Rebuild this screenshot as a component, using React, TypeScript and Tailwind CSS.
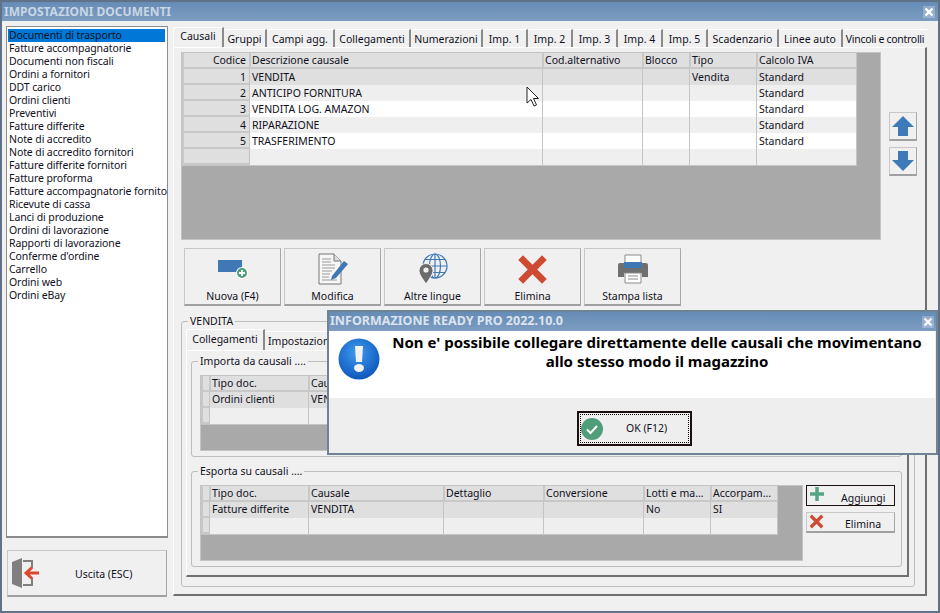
import type { ReactNode } from 'react';

const docs = [
  'Documenti di trasporto', 'Fatture accompagnatorie', 'Documenti non fiscali', 'Ordini a fornitori', 'DDT carico',
  'Ordini clienti', 'Preventivi', 'Fatture differite', 'Note di accredito', 'Note di accredito fornitori',
  'Fatture differite fornitori', 'Fatture proforma', 'Fatture accompagnatorie fornito', 'Ricevute di cassa',
  'Lanci di produzione', 'Ordini di lavorazione', 'Rapporti di lavorazione', "Conferme d'ordine", 'Carrello', 'Ordini web', 'Ordini eBay',
];

const tabs = [
  { label: 'Causali', w: 'w-[51px]' },
  { label: 'Gruppi', w: 'w-[43px]' },
  { label: 'Campi agg.', w: 'w-[68px]' },
  { label: 'Collegamenti', w: 'w-[76px]' },
  { label: 'Numerazioni', w: 'w-[72px]' },
  { label: 'Imp. 1', w: 'w-[45px]' },
  { label: 'Imp. 2', w: 'w-[45px]' },
  { label: 'Imp. 3', w: 'w-[45px]' },
  { label: 'Imp. 4', w: 'w-[45px]' },
  { label: 'Imp. 5', w: 'w-[45px]' },
  { label: 'Scadenzario', w: 'w-[71px]' },
  { label: 'Linee auto', w: 'w-[64px]' },
  { label: 'Vincoli e controlli', w: 'w-[84px] tracking-[-0.3px]' },
];

const causali = [
  ['1', 'VENDITA', '', '', 'Vendita', 'Standard'],
  ['2', 'ANTICIPO FORNITURA', '', '', '', 'Standard'],
  ['3', 'VENDITA LOG. AMAZON', '', '', '', 'Standard'],
  ['4', 'RIPARAZIONE', '', '', '', 'Standard'],
  ['5', 'TRASFERIMENTO', '', '', '', 'Standard'],
  ['', '', '', '', '', ''],
];

const stripes = ['bg-[#dfdfdf]', 'bg-[#efefef]', 'bg-white', 'bg-[#efefef]', 'bg-white', 'bg-[#efefef]'];

function DataGrid({ cols, header, rows, outer, inner, pad = '' }: { cols: string; header: string[]; rows: string[][]; outer: string; inner: string; pad?: string }) {
  return (
    <div className={`${outer} bg-[#a9a9a9] border border-[#c4c4c4]`}>
      <div className={`${inner} border-r border-b border-[#c4c4c4]`}>
        <div className={`grid ${cols} h-[16px] bg-[#dfdfdf]`}>
          {header.map((h, i) => (
            <div key={i} className={`${i === 0 ? 'text-right pr-[3px]' : 'pl-[1px]'} border-l-2 border-b-2 border-[#c8c8c8] leading-[14px] overflow-hidden whitespace-nowrap`}>{h}</div>
          ))}
        </div>
        {rows.map((r, ri) => (
          <div key={ri} className={`grid ${cols} h-[16px] ${stripes[ri]}`}>
            {r.map((c, i) => (
              <div
                key={i}
                className={`${pad} leading-[15px] overflow-hidden whitespace-nowrap ${i === 0 ? 'text-right pr-[3px] bg-[#dfdfdf] border-l-2 border-b-2 border-[#c8c8c8]' : 'pl-[2px] border-l border-[#c4c4c4]'}`}
              >
                {c}
              </div>
            ))}
          </div>
        ))}
      </div>
    </div>
  );
}

function ToolButton({ label, icon }: { label: string; icon: ReactNode }) {
  return (
    <div className="w-[97px] h-[58px] flex flex-col items-center border border-[#c8c8c8] border-r-[#a8a8a8] border-b-2 border-b-[#a0a0a0] bg-[#f0f0f0]">
      <div className="h-[38px] mt-[1px] flex items-center justify-center">{icon}</div>
      <div className="mt-[1px] leading-[14px]">{label}</div>
    </div>
  );
}

function CloseIcon() {
  return (
    <div className="w-[12px] h-[12px] bg-white/25 flex items-center justify-center">
      <svg width="10" height="10" viewBox="0 0 10 10"><path d="M1.5 1.5 8.5 8.5M8.5 1.5 1.5 8.5" stroke="#fff" strokeWidth="2.4" /></svg>
    </div>
  );
}

function RedX({ size }: { size: number }) {
  return (
    <svg width={size} height={size} viewBox="0 0 30 30">
      <path d="M3.5 3.5 26.5 26.5M26.5 3.5 3.5 26.5" stroke="#cf4a32" strokeWidth="6.5" />
    </svg>
  );
}

export default function App() {
  return (
    <div className="relative w-[940px] h-[613px] overflow-hidden border-2 border-[#5f7288] bg-[#f0f0f0] text-[10.5px] text-[#10101c] font-['Noto_Sans','Liberation_Sans',sans-serif] flex flex-col">
      {/* title bar */}
      <div className="h-[19px] shrink-0 bg-gradient-to-b from-[#668cb6] to-[#7d9cc1] flex items-center justify-between pl-[2px] pr-[3px]">
        <span className="text-[12px] font-bold text-[#c9d6e4]">IMPOSTAZIONI DOCUMENTI</span>
        <CloseIcon />
      </div>

      <div className="flex flex-1">
        {/* left column */}
        <div className="w-[169px] shrink-0 pl-[4px] pt-[5px]">
          <div className="w-[162px] h-[512px] bg-white border border-[#8c8c8c] border-b-2 pl-[1px] pt-[2px] overflow-hidden tracking-[-0.1px]">
            {docs.map((d, i) => (
              <div key={d} className={`h-[13px] leading-[13px] pl-[1px] whitespace-nowrap overflow-hidden ${i === 0 ? 'bg-[#0078d7] w-[157px]' : ''}`}>{d}</div>
            ))}
          </div>
          <div className="mt-[12px] ml-[1px] w-[160px] h-[47px] flex items-center border border-[#c8c8c8] border-r-[#a8a8a8] border-b-2 border-b-[#a0a0a0]">
            <svg width="30" height="32" viewBox="0 0 30 32" className="ml-[3px] shrink-0">
              <path d="M1 5 11 1V31L1 27Z" fill="#7f7f7f" />
              <path d="M12 4H21V11M21 21V28H12" fill="none" stroke="#7f7f7f" strokeWidth="2" />
              <path d="M28 16H16M21 10.5 15 16 21 21.500" fill="none" stroke="#d9492f" strokeWidth="3" />
            </svg>
            <span className="ml-[34px] pt-[3px]">Uscita (ESC)</span>
          </div>
        </div>

        {/* right column */}
        <div className="w-[755px] shrink-0 pt-[6px] ml-[2px]">
          <div className="flex h-[20px] items-end">
            {tabs.map((t, i) => (
              <div
                key={t.label}
                className={`${t.w} shrink-0 text-center whitespace-nowrap rounded-tl-[2px] bg-[#f0f0f0] border-t border-white ${i === 0 ? 'h-[20px] leading-[17px] border-l border-l-white border-r-2 border-r-[#8a8a8a]' : i === 12 ? 'h-[18px] leading-[18px]' : 'h-[18px] leading-[18px] border-r-2 border-r-[#8a8a8a]'}`}
              >
                {t.label}
              </div>
            ))}
          </div>
          <div className="w-[754px] h-[549px] border-l border-l-white border-r-2 border-r-[#6f6f6f] border-b-2 border-b-[#6f6f6f] border-t border-t-white pl-[7px] pt-[4px]">
            <div className="flex">
              <DataGrid
                outer="w-[700px] h-[188px]"
                inner="w-[675px]"
                pad="pt-[1px]"
                cols="grid-cols-[67px_293px_100px_47px_67px_100px]"
                header={['Codice', 'Descrizione causale', 'Cod.alternativo', 'Blocco', 'Tipo', 'Calcolo IVA']}
                rows={causali}
              />
              <div className="ml-[8px] pt-[60px] flex flex-col gap-[6px]">
                <div className="w-[28px] h-[29px] flex items-center justify-center border border-[#c8c8c8] border-r-[#a8a8a8] border-b-2 border-b-[#a0a0a0]">
                  <svg width="24" height="22" viewBox="0 0 24 22"><path d="M12 1 23 12H17V21H7V12H1Z" fill="#3f7ab8" /></svg>
                </div>
                <div className="w-[28px] h-[29px] flex items-center justify-center border border-[#c8c8c8] border-r-[#a8a8a8] border-b-2 border-b-[#a0a0a0]">
                  <svg width="24" height="22" viewBox="0 0 24 22"><path d="M12 21 23 10H17V1H7V10H1Z" fill="#3f7ab8" /></svg>
                </div>
              </div>
            </div>

            <div className="flex gap-[3px] mt-[8px] ml-[3px]">
              <ToolButton
                label="Nuova (F4)"
                icon={
                  <svg width="32" height="26" viewBox="0 0 32 26">
                    <path d="M1 4H25V16H1Z" fill="#3f78b5" />
                    <circle cx="25" cy="17" r="6" fill="#fff" />
                    <circle cx="25" cy="17" r="5" fill="#4f9d7b" />
                    <path d="M25 14V20M22 17H28" stroke="#fff" strokeWidth="1.8" />
                  </svg>
                }
              />
              <ToolButton
                label="Modifica"
                icon={
                  <svg width="32" height="32" viewBox="0 0 32 32">
                    <path d="M2 1H17L24 8V31H2Z" fill="#f7f7f7" stroke="#777" />
                    <path d="M17 1V8H24" fill="#ddd" stroke="#777" />
                    <path d="M5 6H14M5 9H14M5 12H18M5 15H18M5 18H15M5 21H13M5 24H12M5 27H20" stroke="#999" />
                    <path d="M15 23 27 8 31 11 19 25 14 27Z" fill="#3f78b5" />
                  </svg>
                }
              />
              <ToolButton
                label="Altre lingue"
                icon={
                  <svg width="32" height="32" viewBox="0 0 32 32">
                    <g fill="none" stroke="#3f78b5" strokeWidth="1.2">
                      <circle cx="18" cy="13" r="12" />
                      <ellipse cx="18" cy="13" rx="5.500" ry="12" />
                      <path d="M18 1V25M6 13H30M8 6.500H28M8 19.500H28" />
                    </g>
                    <path d="M9 31C5 25 2 21 2 17.500A7 7 0 0 1 16 17.500C16 21 13 25 9 31Z" fill="#6a6a6a" stroke="#f0f0f0" />
                    <circle cx="9" cy="17" r="2.600" fill="#f0f0f0" />
                  </svg>
                }
              />
              <ToolButton label="Elimina" icon={<RedX size={31} />} />
              <ToolButton
                label="Stampa lista"
                icon={
                  <svg width="32" height="30" viewBox="0 0 32 30">
                    <path d="M8 1H24V9H8Z" fill="#fff" stroke="#8a8a8a" />
                    <path d="M3 9H29A2 2 0 0 1 31 11V23H25V19H7V23H1V11A2 2 0 0 1 3 9Z" fill="#6f6f6f" />
                    <path d="M7 8H25V14H7Z" fill="#3f78b5" />
                    <path d="M8 19H24V29H8Z" fill="#fff" stroke="#8a8a8a" />
                    <path d="M11 22H21M11 25H21" stroke="#888" />
                  </svg>
                }
              />
            </div>

            {/* VENDITA group */}
            <fieldset className="mt-[9px] w-[734px] h-[272px] border border-[#bdbdbd] rounded-[3px] pl-[4px] pr-[5px]">
              <legend className="ml-[2px] px-[2px] leading-[13px]">VENDITA</legend>
              <div className="flex h-[21px] items-end mt-[1px]">
                <div className="w-[79px] h-[21px] leading-[19px] text-center bg-[#f0f0f0] border-t border-l border-white border-r-2 border-r-[#8a8a8a] rounded-tl-[2px]">Collegamenti</div>
                <div className="w-[70px] h-[19px] leading-[18px] pl-[3px] border-t border-white whitespace-nowrap">Impostazioni</div>
              </div>
              <div className="h-[227px] border-l border-l-white border-t border-t-white border-r-2 border-r-[#6f6f6f] border-b-2 border-b-[#6f6f6f] pl-[4px] pr-[5px] pt-[4px]">
                <fieldset className="h-[102px] border border-[#bdbdbd] rounded-[3px] pl-[8px]">
                  <legend className="-ml-[2px] px-[2px] leading-[13px]">Importa da causali ....</legend>
                  <DataGrid
                    outer="w-[603px] h-[76px] mt-[7px]"
                    inner="w-[577px]"
                    cols="grid-cols-[8px_99px_135px_100px_100px_67px_67px]"
                    header={['', 'Tipo doc.', 'Causale', 'Dettaglio', 'Conversione', 'Lotti e ma...', 'Accorpam...']}
                    rows={[['', 'Ordini clienti', 'VENDITA', '', '', '', ''], ['', '', '', '', '', '', '']]}
                  />
                </fieldset>
                <fieldset className="h-[102px] mt-[8px] border border-[#bdbdbd] rounded-[3px] pl-[8px]">
                  <legend className="-ml-[2px] px-[2px] leading-[13px]">Esporta su causali ....</legend>
                  <div className="flex">
                    <DataGrid
                      outer="w-[603px] h-[76px] mt-[7px]"
                      inner="w-[577px]"
                      cols="grid-cols-[8px_99px_135px_100px_100px_67px_67px]"
                      header={['', 'Tipo doc.', 'Causale', 'Dettaglio', 'Conversione', 'Lotti e ma...', 'Accorpam...']}
                      rows={[['', 'Fatture differite', 'VENDITA', '', '', 'No', 'SI'], ['', '', '', '', '', '', '']]}
                    />
                    <div className="ml-[3px] mt-[7px] flex flex-col gap-[6px]">
                      <div className="w-[89px] h-[21px] flex items-end border border-[#1c1010] bg-[#f0f0f0]">
                        <svg width="16" height="16" viewBox="0 0 16 16" className="ml-[2px] mb-[3px] shrink-0"><path d="M8 1V15M1 8H15" stroke="#55a585" strokeWidth="3.500" /></svg>
                        <span className="ml-[16px] leading-[14px]">Aggiungi</span>
                      </div>
                      <div className="w-[89px] h-[21px] flex items-end border border-[#c8c8c8] border-r-[#a8a8a8] border-b-2 border-b-[#a0a0a0]">
                        <div className="ml-[2px] mb-[2px] shrink-0 flex"><RedX size={15} /></div>
                        <span className="ml-[21px] leading-[14px]">Elimina</span>
                      </div>
                    </div>
                  </div>
                </fieldset>
              </div>
            </fieldset>
          </div>
        </div>
      </div>

      {/* message dialog over the window */}
      <div className="absolute left-[325px] top-[308px] w-[611px] h-[145px] border-2 border-[#6f8296] bg-[#eeeeee] flex flex-col">
        <div className="h-[19px] shrink-0 bg-gradient-to-b from-[#668cb6] to-[#7d9cc1] flex items-center justify-between pl-[1px] pr-[2px]">
          <span className="text-[12.5px] font-bold text-[#dbe4ee]">INFORMAZIONE READY PRO 2022.10.0</span>
          <CloseIcon />
        </div>
        <div className="h-[67px] bg-white flex mr-[1px]">
          <svg width="42" height="42" viewBox="0 0 42 42" className="ml-[9px] mt-[7px] shrink-0">
            <defs>
              <radialGradient id="blue" cx="45%" cy="35%" r="70%">
                <stop offset="0" stopColor="#3f9bf0" />
                <stop offset="1" stopColor="#0a52b8" />
              </radialGradient>
            </defs>
            <circle cx="21" cy="21" r="20.500" fill="url(#blue)" />
            <path d="M17 8H25L24 24H18Z" fill="#f2f2f2" />
            <ellipse cx="21" cy="30" rx="5" ry="4" fill="#f2f2f2" />
          </svg>
          <div className="flex-1 pt-[2px] pr-[1px] text-center text-[15px] leading-[19px] font-bold text-black whitespace-nowrap">
            <div>Non e' possibile collegare direttamente delle causali che movimentano</div>
            <div>allo stesso modo il magazzino</div>
          </div>
        </div>
        <div className="flex-1 flex justify-center pt-[13px] pl-[4px]">
          <div className="w-[115px] h-[35px] border-2 border-[#1c1010] p-[1px]">
            <div className="h-full border border-dotted border-black flex items-center">
              <svg width="22" height="22" viewBox="0 0 22 22" className="shrink-0">
                <circle cx="11" cy="11" r="11" fill="#4f9d7b" />
                <path d="M6 11.500 9.500 15 16 8" fill="none" stroke="#fff" strokeWidth="2" />
              </svg>
              <span className="ml-[23px]">OK (F12)</span>
            </div>
          </div>
        </div>
      </div>

      {/* mouse pointer */}
      <svg width="14" height="21" viewBox="0 0 14 21" className="absolute left-[524px] top-[84px]">
        <path d="M1 1V17L5 13.500 8 20 10.500 19 7.500 12.500H12.500Z" fill="#fff" stroke="#222" />
      </svg>
    </div>
  );
}
